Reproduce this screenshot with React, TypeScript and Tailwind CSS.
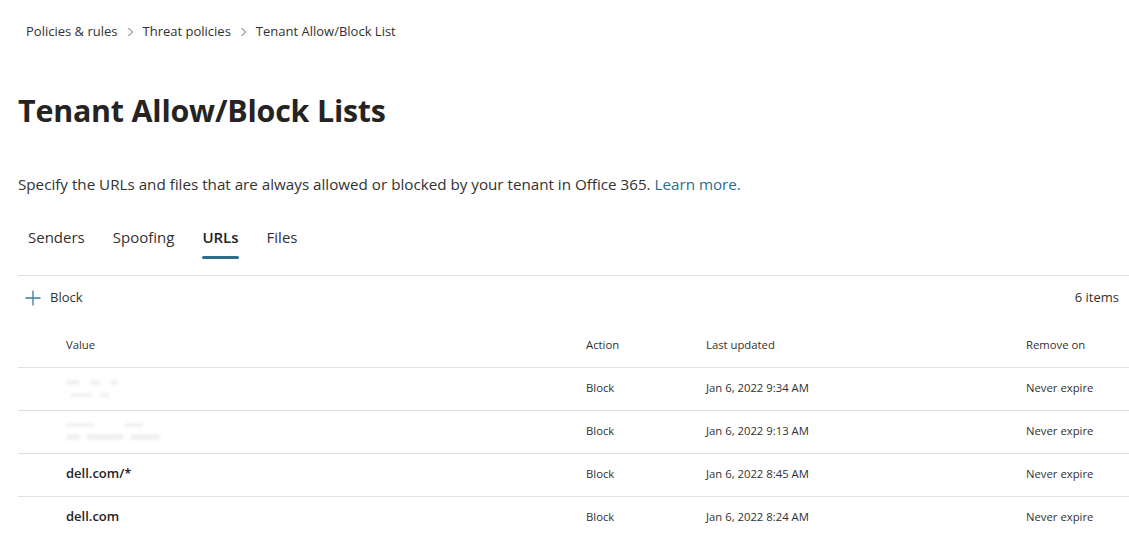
import React from "react";

const rows = [
  { value: "", blurred: 1, date: "Jan 6, 2022 9:34 AM" },
  { value: "", blurred: 2, date: "Jan 6, 2022 9:13 AM" },
  { value: "dell.com/*", blurred: 0, date: "Jan 6, 2022 8:45 AM" },
  { value: "dell.com", blurred: 0, date: "Jan 6, 2022 8:24 AM" },
];

function Chevron() {
  return (
    <svg width="7" height="10" viewBox="0 0 7 10" className="mx-[9px]" fill="none">
      <path d="M1.5 1 L5.5 5 L1.5 9" stroke="#605e5c" strokeWidth="1" />
    </svg>
  );
}

function Smudge({ w, h = 5, className = "" }: { w: number; h?: number; className?: string }) {
  return <div className={"rounded-sm bg-[#f0f0f0] blur-[1.5px] " + className} style={{ width: w, height: h }} />;
}

export default function App() {
  return (
    <div className="w-[1129px] h-[537px] overflow-hidden bg-white text-[#323130] font-['Segoe_UI','Open_Sans',sans-serif]">
      {/* breadcrumb */}
      <div className="h-[62px] pl-[26px] pt-[22px] flex items-start">
        <div className="flex items-center h-[19px] text-[13px] text-[#323130]">
          <span>Policies &amp; rules</span>
          <Chevron />
          <span>Threat policies</span>
          <Chevron />
          <span>Tenant Allow/Block List</span>
        </div>
      </div>
      {/* title */}
      <div className="h-[98px] pl-[18px] pt-[29px]">
        <h1 className="text-[30.4px] leading-[40px] font-bold text-[#252423] tracking-[-0.2px]">Tenant Allow/Block Lists</h1>
      </div>
      {/* description */}
      <div className="h-[50px] pl-[18px] pt-[14px] text-[15.2px] leading-[20px] text-[#323130]">
        Specify the URLs and files that are always allowed or blocked by your tenant in Office 365.{" "}
        <span className="text-[#2a6d8f]">Learn more.</span>
      </div>
      {/* tabs */}
      <div className="ml-[18px] h-[66px] border-b border-[#e1dfdd] flex items-start pt-[14px] pl-[10px] gap-[28px] text-[15px]">
        <div className="flex flex-col items-center">
          <span className="leading-[26px]">Senders</span>
        </div>
        <div className="flex flex-col items-center">
          <span className="leading-[26px]">Spoofing</span>
        </div>
        <div className="flex flex-col items-center">
          <span className="leading-[26px] font-semibold text-[#252423]">URLs</span>
          <div className="mt-[6px] h-[3px] w-full bg-[#2f6f8a] rounded-sm" />
        </div>
        <div className="flex flex-col items-center">
          <span className="leading-[26px]">Files</span>
        </div>
      </div>
      {/* toolbar */}
      <div className="ml-[18px] h-[48px] pb-[4px] flex items-center justify-between pr-[10px]">
        <div className="flex items-center pl-[7px]">
          <svg width="16" height="16" viewBox="0 0 16 16" fill="none">
            <path d="M8 0.5 V15.5 M0.5 8 H15.5" stroke="#3a7aa3" strokeWidth="1.3" />
          </svg>
          <span className="ml-[9px] text-[13px]">Block</span>
        </div>
        <span className="text-[13px]">6 items</span>
      </div>
      {/* table */}
      <div className="ml-[18px]">
        <div className="grid grid-cols-[568px_120px_320px_1fr] h-[44px] items-center border-b border-[#e1dfdd] text-[11.3px] text-[#323130]">
          <span className="pl-[48px]">Value</span>
          <span>Action</span>
          <span>Last updated</span>
          <span>Remove on</span>
        </div>
        {rows.map((r, i) => (
          <div
            key={i}
            className="grid grid-cols-[568px_120px_320px_1fr] h-[43px] pb-[2px] items-center border-b border-[#e1dfdd] text-[11.3px] text-[#323130]"
          >
            <div className="pl-[48px]">
              {r.blurred === 1 && (
                <div className="flex flex-col gap-[8px]">
                  <div className="flex gap-[10px]">
                    <Smudge w={14} />
                    <Smudge w={10} />
                    <Smudge w={8} />
                  </div>
                  <div className="flex gap-[8px] pl-[4px]">
                    <Smudge w={22} h={4} />
                    <Smudge w={10} h={4} />
                  </div>
                </div>
              )}
              {r.blurred === 2 && (
                <div className="flex flex-col gap-[7px]">
                  <div className="flex gap-[30px]">
                    <Smudge w={28} h={4} />
                    <Smudge w={20} h={4} />
                  </div>
                  <div className="flex gap-[6px]">
                    <Smudge w={14} h={6} />
                    <Smudge w={38} h={6} />
                    <Smudge w={30} h={6} />
                  </div>
                </div>
              )}
              {r.value && <span className="text-[13px] font-semibold text-[#252423]">{r.value}</span>}
            </div>
            <span>Block</span>
            <span>{r.date}</span>
            <span>Never expire</span>
          </div>
        ))}
      </div>
    </div>
  );
}
